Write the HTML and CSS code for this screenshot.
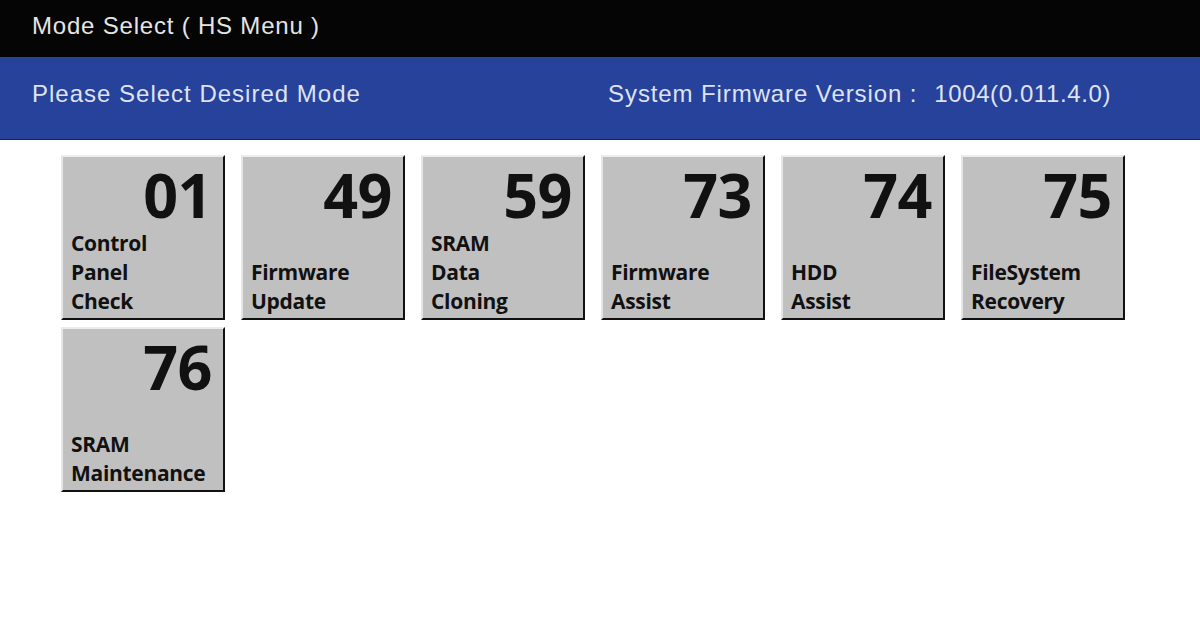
FILE: index.html
```html
<!DOCTYPE html>
<html lang="en">
<head>
    <meta charset="UTF-8">
    <meta name="viewport" content="width=device-width, initial-scale=1.0">
    <title>Mode Select ( HS Menu )</title>
    <link rel="stylesheet" href="styles.css">
</head>
<body>
    <header class="title-bar">Mode Select ( HS Menu )</header>

    <div class="info-bar">
        <span class="prompt">Please Select Desired Mode</span>
        <span class="firmware">
            <span class="fw-label">System Firmware Version :</span>
            <span class="fw-value">1004(0.011.4.0)</span>
        </span>
    </div>

    <main class="mode-grid">
        <div class="mode-tile">
            <div class="mode-num">01</div>
            <div class="mode-name">Control<br>Panel<br>Check</div>
        </div>
        <div class="mode-tile">
            <div class="mode-num">49</div>
            <div class="mode-name">Firmware<br>Update</div>
        </div>
        <div class="mode-tile">
            <div class="mode-num">59</div>
            <div class="mode-name">SRAM<br>Data<br>Cloning</div>
        </div>
        <div class="mode-tile">
            <div class="mode-num">73</div>
            <div class="mode-name">Firmware<br>Assist</div>
        </div>
        <div class="mode-tile">
            <div class="mode-num">74</div>
            <div class="mode-name">HDD<br>Assist</div>
        </div>
        <div class="mode-tile">
            <div class="mode-num">75</div>
            <div class="mode-name">FileSystem<br>Recovery</div>
        </div>
        <div class="mode-tile">
            <div class="mode-num">76</div>
            <div class="mode-name">SRAM<br>Maintenance</div>
        </div>
    </main>
</body>
</html>
```

FILE: styles.css
```css
body {
    margin: 0;
    background-color: #fff;
    font-family: 'Liberation Sans', Arial, sans-serif;
}

.title-bar {
    height: 57px;
    background-color: #050505;
    color: #e4e4e4;
    font-size: 24px;
    line-height: 51px;
    padding-left: 32px;
    letter-spacing: 0.8px;
}

.info-bar {
    height: 82px;
    background-color: #26429a;
    border-bottom: 1px solid #14235a;
    color: #dfe2f2;
    font-size: 24px;
    display: flex;
    align-items: center;
    justify-content: space-between;
    padding: 0 89px 0 32px;
    letter-spacing: 1px;
    line-height: 1;
}

.prompt,
.firmware {
    margin-top: -8px;
}

.firmware {
    display: flex;
    gap: 17px;
}

.fw-label {
    letter-spacing: 0.9px;
}

.fw-value {
    letter-spacing: 0.6px;
}

/* Bloques de modo */
.mode-grid {
    display: grid;
    grid-template-columns: repeat(6, 164px);
    column-gap: 16px;
    row-gap: 7px;
    padding: 15px 0 0 61px;
}

.mode-tile {
    height: 165px;
    box-sizing: border-box;
    background-color: #c0c0c0;
    border: 2px solid;
    border-color: #ececec #111 #111 #e6e6e6;
    display: flex;
    flex-direction: column;
    padding: 7px 0 2px 8px;
    font-family: 'Open Sans', 'Noto Sans', sans-serif;
    font-weight: bold;
    color: #111;
}

.mode-num {
    font-size: 61px;
    line-height: 1;
    text-align: right;
    padding-right: 11px;
    letter-spacing: -0.5px;
}

.mode-name {
    margin-top: auto;
    font-size: 21px;
    line-height: 29px;
    letter-spacing: -0.3px;
}
```
